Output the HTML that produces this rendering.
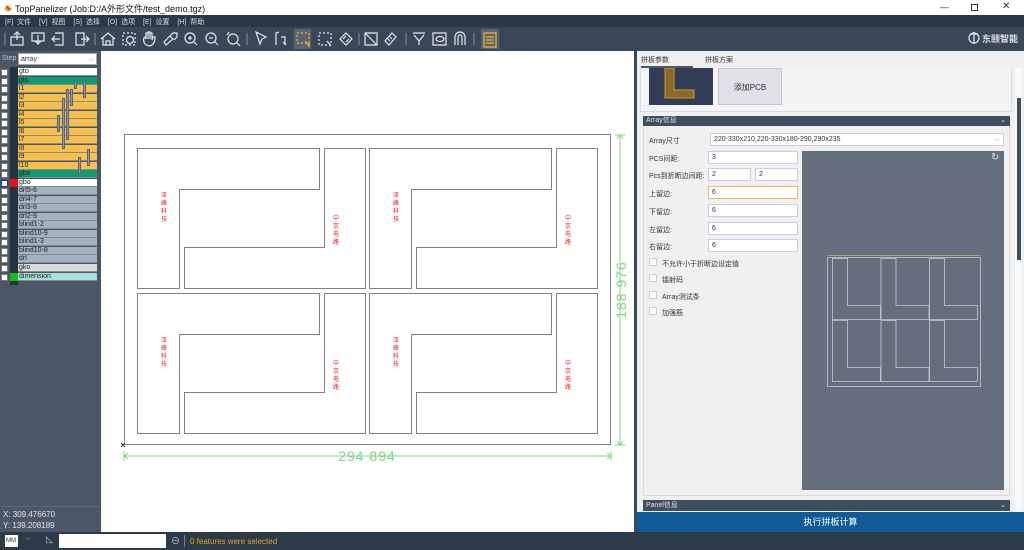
<!DOCTYPE html>
<html><head><meta charset="utf-8"><style>
*{margin:0;padding:0;box-sizing:border-box}
body{width:1024px;height:550px;overflow:hidden;position:relative;font-family:"Liberation Sans","Noto Sans CJK SC",sans-serif;background:#2f3c4a}
.a{position:absolute}
.t{font-size:7px;color:#333;white-space:nowrap}
.row{position:absolute;left:0;width:100px;height:8.5px}
.row .cb{position:absolute;left:1px;top:1px;width:7px;height:7px;background:#fff;border:1px solid #777}
.row .nm{position:absolute;left:18px;width:79px;top:0;height:8px;font-size:7px;line-height:8px;padding-left:1px;color:#222;border-bottom:1px solid #8a8a8a}
.inp{position:absolute;background:#fff;border:1px solid #ccd;font-size:7px;line-height:12px;padding-left:3px;color:#333;height:13px}
.lbl{position:absolute;left:649px;font-size:7px;color:#333}
.chk{position:absolute;left:649px;width:8px;height:8px;background:#fff;border:1px solid #ccc}
</style></head><body>
<!-- title bar -->
<div class="a" style="left:0;top:0;width:1024px;height:15px;background:#fff"></div>
<svg class="a" style="left:3px;top:3px" width="10" height="10"><path d="M1 6 L5 2 L9 6 L5 9Z" fill="#f0a030"/><path d="M3 3 L7 7" stroke="#d04020" stroke-width="1.5"/></svg>
<div class="a" style="left:15px;top:2px;font-size:9px;color:#111">TopPanelizer (Job:D:/A外形文件/test_demo.tgz)</div>
<div class="a" style="left:940px;top:2px;font-size:9px;color:#333">—</div>
<div class="a" style="left:971px;top:4px;width:7px;height:7px;border:1px solid #333"></div>
<div class="a" style="left:1002px;top:1px;font-size:10px;color:#333">✕</div>
<!-- menu -->
<div class="a" style="left:0;top:15px;width:1024px;height:12px;background:#2b3846"></div>
<div class="a" style="left:5px;top:17px;font-size:7px;color:#d8dde2;word-spacing:2px">[F] 文件 &nbsp;[V] 视图 &nbsp;[S] 选择 &nbsp;[O] 选项 &nbsp;[E] 设置 &nbsp;[H] 帮助</div>
<!-- toolbar -->
<div class="a" style="left:0;top:27px;width:1024px;height:24px;background:#3a4756"></div>
<div class="a" style="left:294px;top:29px;width:17px;height:20px;background:#5a6370"></div>
<div class="a" style="left:481px;top:29px;width:18px;height:20px;background:#5a6370"></div>
<svg class="a" style="left:0;top:27px" width="520" height="24" fill="none" stroke="#e4e8ec" stroke-width="1.2">
<g stroke="#7a8490"><path d="M5 6v12M95 6v12M247 6v12M359 6v12M406 6v12M474 6v12"/></g>
<path d="M11 10h12v8H11z M17 13V5 M14 8l3-3 3 3"/>
<path d="M32 6h12v8H32z M38 8v9 M35 14l3 3 3-3"/>
<path d="M55 6h8v12h-8 M52 12h8 M55 9l-3 3 3 3"/>
<path d="M76 6h8v12h-8z M81 12h8 M86 9l3 3-3 3"/>
<path d="M101 12l7-6 7 6 M103 11v7h10v-7 M106 18v-4h4v4"/>
<path d="M123 6h12v12h-12z" stroke-dasharray="2 2"/><circle cx="130" cy="13" r="3.5"/>
<path d="M146 18c-3-3-3-7-1-8l1 2v-6h2v6-7h2v7-6h2v7l1-3h2c0 5-2 8-5 9z"/>
<path d="M166 18l-2-3 6-6 3 3 z M170 9l3-3h4v4l-3 3"/>
<circle cx="190" cy="11" r="5"/><path d="M194 15l3 3 M188 11h4 M190 9v4"/>
<circle cx="211" cy="11" r="5"/><path d="M215 15l3 3 M209 11h4"/>
<circle cx="233" cy="12" r="5"/><path d="M237 16l3 3 M227 8l2-3"/>
<path d="M256 5l10 5-4 2-2 5z"/>
<path d="M276 18v-12l3-1 M281 10h4v8 M283 15l3 3"/>
<g stroke="#f2b232"><path d="M297 6h12v10h-12z" stroke-dasharray="2 2"/><path d="M305 14l4 5 0-4"/></g>
<path d="M319 6h12v12h-12z" stroke-dasharray="2 2"/><path d="M327 14l4 5"/>
<path d="M340 12l6-6 6 6-6 6z M343 12l3-3 M346 15l3-3"/>
<path d="M365 6h12v12h-12z M365 6l12 12"/>
<path d="M385 14l7-8 4 4-7 8z M388 12l2 2 M390 10l2 2"/>
<path d="M413 6h12 M414 8l5 6v4 M424 8l-5 6"/>
<path d="M433 6h13v12h-13z"/><ellipse cx="440" cy="12" rx="4" ry="2.5"/>
<path d="M455 18v-8a5 5 0 0 1 10 0v8 M458 18v-8a2 2 0 0 1 4 0v8"/>
<g stroke="#f2b232"><path d="M484 6h12v14h-12z M486 10h8 M486 13h8 M486 16h8"/></g>
</svg>
<svg class="a" style="left:968px;top:31px" width="12" height="14" fill="none" stroke="#dfe3e7" stroke-width="1.3"><circle cx="6" cy="7" r="5"/><path d="M6 1v12 M2 3h8"/></svg>
<div class="a" style="left:982px;top:32px;font-size:9px;color:#dfe3e7;font-weight:bold">东颐智能</div>
<!-- left panel -->
<div class="a" style="left:0;top:51px;width:101px;height:481px;background:#4b5767"></div>
<div class="a" style="left:10px;top:67px;width:8px;height:218px;background:#27323f"></div>
<div class="a" style="left:2px;top:55px;font-size:7px;color:#b8c0c8">Step</div>
<div class="a" style="left:18px;top:53px;width:79px;height:12px;background:#fff;border:1px solid #aaa;font-size:7px;line-height:11px;padding-left:2px;color:#333">array<span style="float:right;margin-right:2px;color:#888">⌵</span></div>
<div id="rows"></div>
<div class="a" style="left:2px;top:506px;width:97px;height:1px;background:#5f6b78"></div>
<div class="a" style="left:3px;top:510px;font-size:8px;color:#dfe4e8">X: 309.476670</div>
<div class="a" style="left:3px;top:521px;font-size:8px;color:#dfe4e8">Y: 139.208189</div>
<!-- canvas -->
<div class="a" style="left:101px;top:51px;width:533px;height:481px;background:#fff"></div>
<div class="a" style="left:634px;top:51px;width:3px;height:481px;background:#3a4756"></div>
<svg class="a" style="left:101px;top:51px" width="533" height="481" fill="none">
<g stroke="#808080" stroke-width="1">
<rect x="23.5" y="83.5" width="486" height="310"/>
<g id="cell">
<path d="M36.5 97.5H218.5V138.5H78.5V237.5H36.5Z"/>
<path d="M223.5 97.5H264.5V237.5H83.5V196.5H223.5Z"/>
</g>
<use href="#cell" x="232"/><use href="#cell" y="145"/><use href="#cell" x="232" y="145"/>
</g>
<g stroke="#7dd87d" stroke-width="1">
<path d="M23 405H510 M519 84V394 M23 400v10 M510 400v10 M514 84h10 M514 394h10"/>
<path d="M27 402l-4 3 4 3 M506 402l4 3-4 3 M516 88l3-4 3 4 M516 390l3 4 3-4"/>
</g>
<text x="266" y="410" text-anchor="middle" font-size="14" fill="#7dd87d" font-family="Liberation Sans" letter-spacing="1">294 894</text>
<text transform="translate(525,239) rotate(-90)" text-anchor="middle" font-size="14" fill="#7dd87d" font-family="Liberation Sans" letter-spacing="1">188 976</text>
<g fill="#ee2020" font-size="6" font-family="Noto Sans CJK SC">
<g id="lbl"><text x="60" y="146">泽</text><text x="60" y="154">峰</text><text x="60" y="162">科</text><text x="60" y="170">技</text>
<text x="232" y="169">中</text><text x="232" y="177">京</text><text x="232" y="185">电</text><text x="232" y="193">路</text></g>
<use href="#lbl" x="232"/><use href="#lbl" y="145"/><use href="#lbl" x="232" y="145"/>
</g>
<path d="M20 396l4-4M20 392l4 4" stroke="#333"/>
</svg>
<!-- right panel -->
<div class="a" style="left:637px;top:51px;width:387px;height:461px;background:#eef0f2"></div>
<div class="a" style="left:641px;top:55px;font-size:7px;color:#333">拼板参数</div>
<div class="a" style="left:705px;top:55px;font-size:7px;color:#333">拼板方案</div>
<div class="a" style="left:641px;top:66px;width:52px;height:2px;background:#4a5868"></div>
<div class="a" style="left:640px;top:68px;width:372px;height:44px;border:1px solid #d8dade;border-top:none;background:#f3f4f6"></div>
<div class="a" style="left:649px;top:68px;width:64px;height:37px;background:#333d55"></div>
<svg class="a" style="left:649px;top:68px" width="64" height="37"><path d="M16 0V30H45V22H25V0Z" fill="#8a6a2a" stroke="#c89a38"/></svg>
<div class="a" style="left:718px;top:68px;width:64px;height:37px;background:#dfe1e4;border:1px solid #c4c6ca;font-size:8px;color:#333;text-align:center;line-height:38px">添加PCB</div>
<div class="a" style="left:1015px;top:68px;width:7px;height:444px;background:#f8f9fa"></div>
<div class="a" style="left:1017px;top:98px;width:4px;height:162px;background:#3f4d5c"></div>
<div class="a" style="left:643px;top:116px;width:367px;height:10px;background:#3e4e5f;font-size:7px;color:#e0e4e8;line-height:10px;padding-left:3px">Array信息<span style="float:right;margin-right:4px">⌄</span></div>
<div class="a" style="left:643px;top:126px;width:367px;height:370px;border:1px solid #d8dade;border-top:none"></div>
<div class="lbl" style="top:136px">Array尺寸</div>
<div class="inp" style="left:710px;top:133px;width:294px">220-330x210,220-330x180-290,290x235<span style="float:right;margin-right:3px;color:#999">⌵</span></div>
<div class="lbl" style="top:154px">PCS间距:</div><div class="inp" style="left:708px;top:151px;width:90px">3</div>
<div class="lbl" style="top:171px">Pcs到折断边间距:</div><div class="inp" style="left:708px;top:168px;width:43px">2</div><div class="inp" style="left:755px;top:168px;width:43px">2</div>
<div class="lbl" style="top:189px">上留边:</div><div class="inp" style="left:708px;top:186px;width:90px;border-color:#f0b848">6</div>
<div class="lbl" style="top:207px">下留边:</div><div class="inp" style="left:708px;top:204px;width:90px">6</div>
<div class="lbl" style="top:225px">左留边:</div><div class="inp" style="left:708px;top:222px;width:90px">6</div>
<div class="lbl" style="top:242px">右留边:</div><div class="inp" style="left:708px;top:239px;width:90px">6</div>
<div class="chk" style="top:258px"></div><div class="lbl" style="left:662px;top:259px">不允许小于折断边设定值</div>
<div class="chk" style="top:274px"></div><div class="lbl" style="left:662px;top:275px">镭射码</div>
<div class="chk" style="top:291px"></div><div class="lbl" style="left:662px;top:292px">Array测试条</div>
<div class="chk" style="top:307px"></div><div class="lbl" style="left:662px;top:308px">加强筋</div>
<div class="a" style="left:802px;top:151px;width:202px;height:339px;background:#646e7c"></div>
<div class="a" style="left:991px;top:152px;font-size:10px;color:#dfe3e6">↻</div>
<svg class="a" style="left:802px;top:240px" width="202" height="160" fill="none" stroke="#c8ccd2" stroke-width="0.8">
<path d="M25.5 15.5H178.5" stroke="#b8c080"/>
<rect x="25.5" y="17.5" width="153" height="129"/>
<g id="lc"><path d="M30.5 18.5H45.5V65.5H78.5V79.5H30.5Z"/></g>
<use href="#lc" x="48.5"/><use href="#lc" x="97"/><use href="#lc" y="62"/><use href="#lc" x="48.5" y="62"/><use href="#lc" x="97" y="62"/>
</svg>
<div class="a" style="left:643px;top:500px;width:367px;height:11px;background:#3e4e5f;font-size:7px;color:#e0e4e8;line-height:11px;padding-left:3px">Panel信息<span style="float:right;margin-right:4px">⌄</span></div>
<div class="a" style="left:637px;top:512px;width:387px;height:20px;background:#0e5b97;color:#fff;font-size:9px;text-align:center;line-height:20px">执行拼板计算</div>
<!-- status -->
<div class="a" style="left:0;top:532px;width:1024px;height:18px;background:#2d3a48"></div>
<div class="a" style="left:5px;top:535px;width:13px;height:12px;background:#fff;font-size:6px;line-height:12px;color:#333;padding-left:1px">MM</div>
<div class="a" style="left:25px;top:535px;font-size:7px;color:#aaa">⌵</div>
<div class="a" style="left:46px;top:534px;font-size:9px;color:#ccc">◺</div>
<div class="a" style="left:59px;top:534px;width:107px;height:14px;background:#fff"></div>
<div class="a" style="left:171px;top:534px;font-size:9px;color:#ccc">⊖</div>
<div class="a" style="left:184px;top:535px;width:1px;height:12px;background:#7a8490"></div>
<div class="a" style="left:190px;top:537px;font-size:8px;color:#e6a030">0 features were selected</div>
<script>
var R=[["gto","#fff"],["gts","#0b9c70"],["l1","#f7c04c"],["l2","#f7c04c"],["l3","#f7c04c"],["l4","#f7c04c"],["l5","#f7c04c"],["l6","#f7c04c"],["l7","#f7c04c"],["l8","#f7c04c"],["l9","#f7c04c"],["l10","#f7c04c"],["gbs","#0b9c70"],["gbo","#fff"],["drl5-6","#a3b4c0"],["drl4-7","#a3b4c0"],["drl3-8","#a3b4c0"],["drl2-9","#a3b4c0"],["blind1-2","#a3b4c0"],["blind10-9","#a3b4c0"],["blind1-3","#a3b4c0"],["blind10-8","#a3b4c0"],["drl","#a3b4c0"],["gko","#dcdcdc"],["dimension","#a6e0dc"]];
var h="";R.forEach(function(r,i){var y=68+i*8.5+(i==24?0.5:0);h+='<div class="row" style="top:'+y+'px"><div class="cb" style="'+(i==13?'border:1px solid #1030d0;':'')+'"></div>'+(i==13?'<div class="a" style="left:10px;top:0;width:8px;height:8px;background:#f01010"></div>':'')+(i==24?'<div class="a" style="left:10px;top:0;width:8px;height:8px;background:#10c010"></div>':'')+'<div class="nm" style="background:'+r[1]+'">'+r[0]+'</div></div>';});
var bars=[[74,1,2],[83,1,3],[70,2,4],[66,2,8],[62,3,9],[57,5,7],[87,9,11],[78,10,12]];
bars.forEach(function(b){h+='<div class="a" style="left:'+b[0]+'px;top:'+(68+b[1]*8.5+4)+'px;width:3px;height:'+((b[2]-b[1])*8.5)+'px;background:#8d9aa6;border:1px solid #5a6570"></div>';});
document.getElementById("rows").innerHTML=h;
</script>
</body></html>
